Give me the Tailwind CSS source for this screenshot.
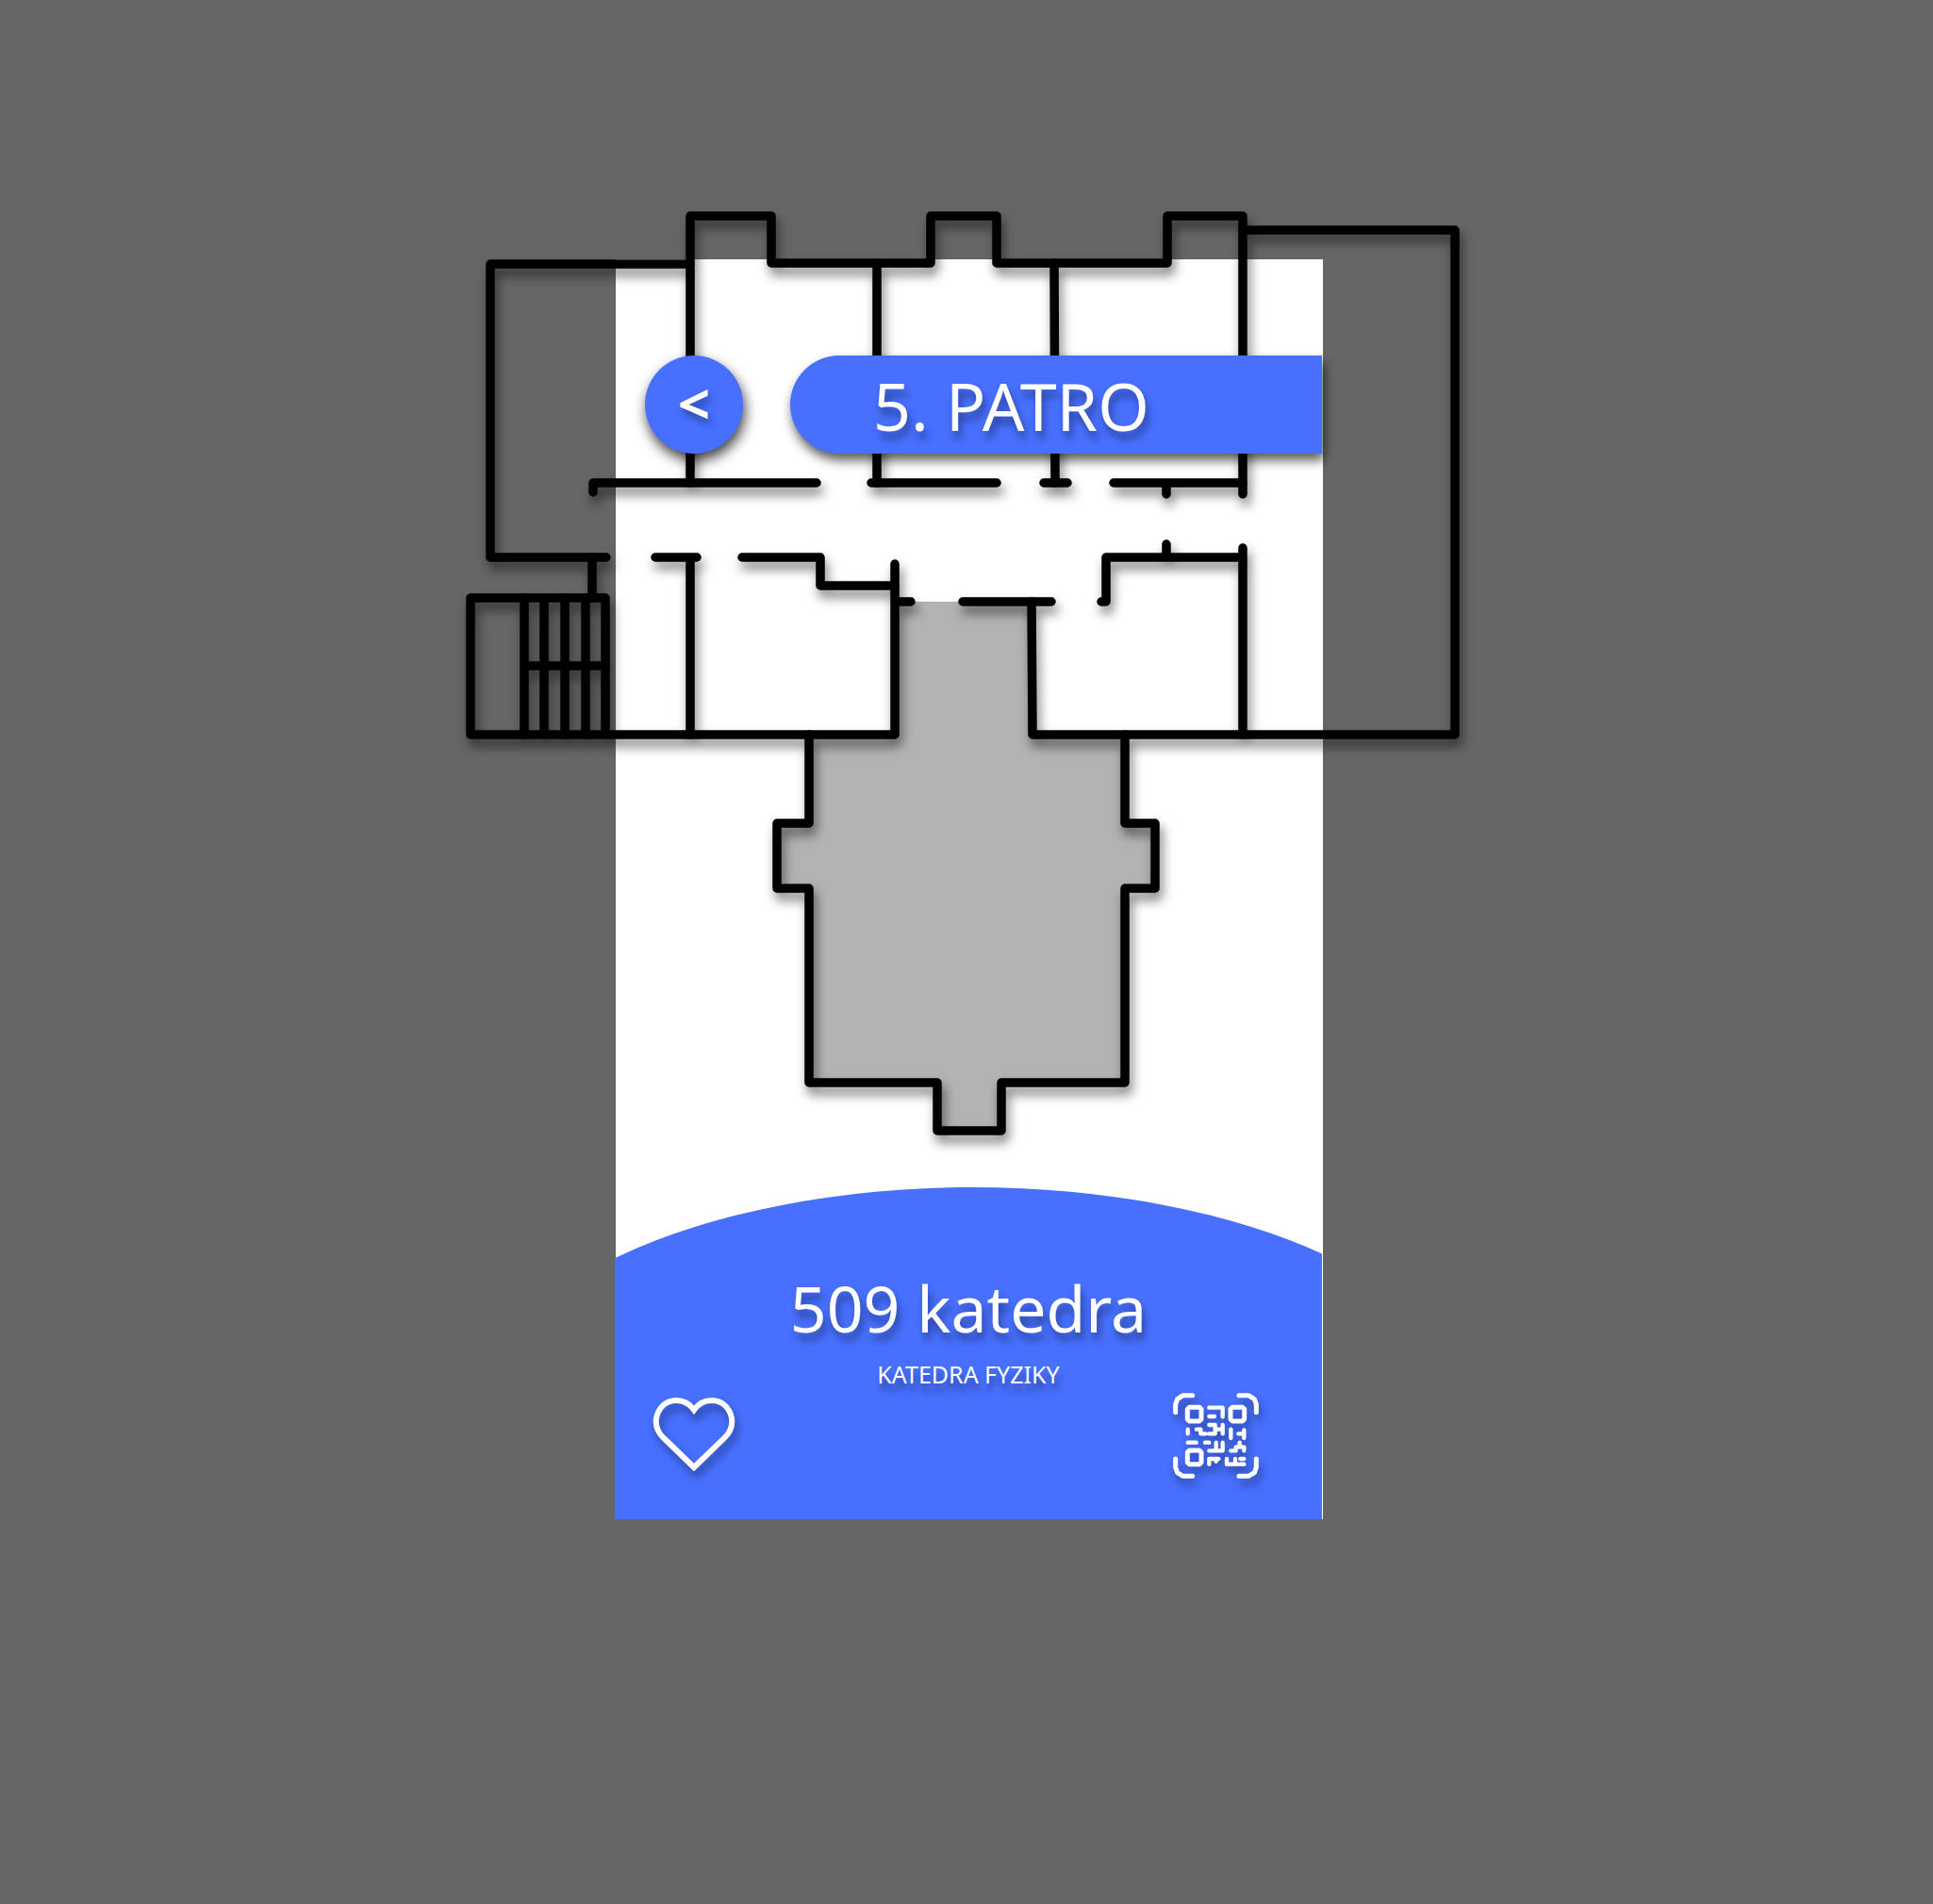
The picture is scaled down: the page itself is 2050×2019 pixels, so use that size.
<!DOCTYPE html>
<html lang="cs">
<head>
<meta charset="utf-8">
<meta name="viewport" content="width=device-width, initial-scale=1">
<title>5. patro – 509 katedra</title>
<script src="https://cdn.jsdelivr.net/npm/@tailwindcss/browser@4"></script>
</head>
<body class="min-h-screen bg-[#666666] text-white font-['Noto_Sans',sans-serif]">
<main class="flex min-h-screen items-start justify-center overflow-hidden pt-[275px] pb-96 pl-[6px]">
  <div class="relative flex min-h-[1336px] w-[750px] shrink-0 flex-col justify-between bg-white">

    <!-- floor plan, wider than the screen: hall area below, walls above -->
    <svg class="pointer-events-none absolute -top-[75px] -left-[173px] h-[1040px] w-[1100px]" viewBox="480 200 1100 1040" aria-hidden="true">
      <path fill="#b3b3b3" d="M949 638H1094V779H1193V873H1225V942H1193V1148H1062V1199H994V1148H858V942H824V873H858V779H949Z"/>
    </svg>
    <svg class="pointer-events-none absolute -top-[75px] -left-[173px] h-[1040px] w-[1100px] drop-shadow-[3px_8px_6px_rgba(0,0,0,0.5)]" viewBox="480 200 1100 1040" role="img" aria-label="Plán 5. patra">
      <g fill="none" stroke="#000" stroke-width="9.5" stroke-linecap="round" stroke-linejoin="round">
        <path d="M732 280H520V591H643"/>
        <path d="M732 512V229H818V279H987V229H1057V279H1238V229H1318V524"/>
        <path d="M1318 244H1543V779H1095L1094 638"/>
        <path d="M930 279V512M1118 279L1119 512"/>
        <path d="M629 522V512H866M924 512H1057M1107 512H1132M1181 512H1318M1237 512V524"/>
        <path d="M628 591V634M695 591H739M732 591V779M787 591H870V621H949"/>
        <path d="M949 598V779H499V634H642V779M949 638H966M1021 638H1115M1168 638H1173V591H1318M1237 577V591M1318 581V779"/>
        <path d="M556 634V779M577 634V779M599 634V779M621 634V779M556 706H642"/>
        <path d="M858 779V873H824V942H858V1148H994V1199H1062V1148H1193V942H1225V873H1193V779"/>
      </g>
    </svg>

    <header class="relative mt-[102px] flex items-center gap-[50px] pr-px pl-[31px]">
      <button type="button" aria-label="Zpět" class="flex size-[104px] items-center justify-center rounded-full bg-[#4770ff] pb-1 text-[60px] leading-none font-bold shadow-[2px_7px_14px_rgba(0,0,0,0.75)] text-shadow-[3px_6px_8px_rgba(0,0,0,0.4)]">&lt;</button>
      <h1 class="h-[104px] flex-1 rounded-l-full bg-[#4770ff] pl-[88px] text-[70px] leading-[106px] shadow-[2px_7px_12px_rgba(0,0,0,0.65)] text-shadow-[3px_8px_8px_rgba(0,0,0,0.4)]">5. PATRO</h1>
    </header>

    <section class="relative mr-px -ml-px h-[352px]">
      <svg class="absolute inset-0 size-full" viewBox="0 0 750 352" preserveAspectRatio="none" aria-hidden="true">
        <ellipse fill="#4770ff" cx="380" cy="248" rx="530" ry="248"/>
        <path fill="#4770ff" d="M0 248H750V352H0Z"/>
      </svg>
      <div class="relative flex flex-col items-center pt-[84px] text-center">
        <h2 class="text-[68px] leading-[88px] text-shadow-[3px_8px_8px_rgba(0,0,0,0.4)]">509 katedra</h2>
        <p class="mt-2 text-[25px] leading-[36px] text-shadow-[2px_9px_7px_rgba(0,0,0,0.4)]">KATEDRA FYZIKY</p>
      </div>
      <div class="relative flex items-center justify-between pt-[2px] pr-[67px] pl-[40px]">
        <button type="button" aria-label="Oblíbené" class="pb-1">
          <svg class="h-[80px] w-[88px] drop-shadow-[3px_7px_5px_rgba(0,0,0,0.4)]" viewBox="0 0 88 80" fill="none" stroke="#fff" stroke-width="6"><path d="M44 75L11 43C4 36 3 30 4 23C6 12 14 4 25 4C33 4 39 7 44 14C49 7 55 4 63 4C74 4 82 12 84 23C85 30 84 36 77 43Z"/></svg>
        </button>
        <button type="button" aria-label="Skenovat QR kód">
          <svg class="size-[91px] drop-shadow-[3px_7px_5px_rgba(0,0,0,0.4)]" viewBox="72 54 273 273" fill="none" stroke="#fff" stroke-width="15" stroke-linecap="round" stroke-linejoin="round">
            <path d="M80 116V90L86 74L104 62H134M282 62H312L331 74L337 90V116M337 264V291L331 308L312 319H282M134 319H104L86 308L80 291V264"/>
            <path stroke-width="15" d="M124 100H156L162 106V138L156 144H124L118 138V106ZM261 100H293L299 106V138L293 144H261L255 138V106ZM124 237H156L162 243V275L156 281H124L118 275V243Z"/>
            <path stroke-width="13" d="M187 101H230V130M187 129H204M187 156H206V184H187M206 170H230M230 156V184M256 170V198M298 172V198M280 184H298M119 170V184M147 170H160V184H176M119 212H146M174 212H187M209 212V238M230 212V238H187M256 238H272V226M284 212V226M272 226H298V238M187 264H217M187 264V281M209 264V272M243 264V281H298M270 264V281M286 264H298"/>
          </svg>
        </button>
      </div>
    </section>
  </div>
</main>
</body>
</html>
